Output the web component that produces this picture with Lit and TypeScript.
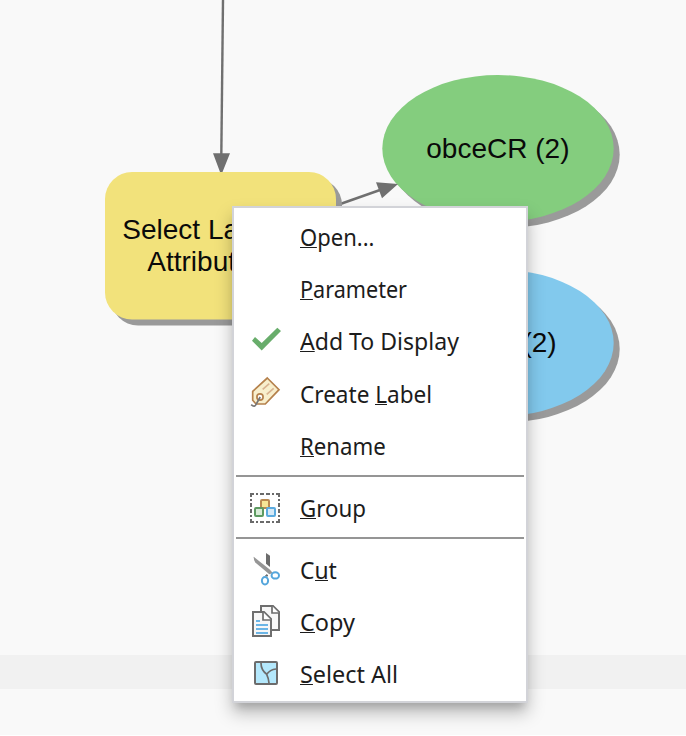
import { LitElement, html, css, svg, nothing } from "lit";
import { customElement, property } from "lit/decorators.js";
import { styleMap } from "lit/directives/style-map.js";

const icons: Record<string, unknown> = {
  check: svg`<path d="M3 14.7 6 10.9 12.7 16.9 28.3 1.7 32 5 12.7 24.5Z" fill="#68ad6b"/>`,
  tag: svg`
    <path d="M18.3-1 30 10.7 16.3 25H7L3.7 21.3V12.3Z" fill="#f8efcd" stroke="#b5814c" stroke-width="1.7"/>
    <path d="M13.7 10.3 20.3 4.7M17.7 15.3 24.7 9.3" stroke="#d9b491" stroke-width="1.7"/>
    <circle cx="11" cy="18" r="3.1" fill="#fff" stroke="#b5814c" stroke-width="1.7"/>
    <path d="M11.2 18 7.3 25Q5.5 29 2.2 25.6" fill="none" stroke="#777" stroke-width="1.7"/>`,
  group: svg`
    <path d="M1 1H31M1 29H31M2 0V30M30 0V30" stroke="#6a6a6a" stroke-width="2" stroke-dasharray="4 2 2 2 4 2 4 2 2 2 4 2"/>
    <rect x="12" y="7" width="8" height="8" rx="1" fill="#f6e596" stroke="#b98951" stroke-width="2"/>
    <rect x="6" y="15" width="8" height="8" rx="1" fill="#d9ecd8" stroke="#5d9a61" stroke-width="2"/>
    <rect x="18" y="15" width="8" height="8" rx="1" fill="#d5e9f7" stroke="#5baade" stroke-width="2"/>`,
  cut: svg`
    <path d="M17-2 21 .7V12L17 8.7Z" fill="#6c6c6c"/>
    <path d="M16.5 21 17.8 19.5 18.8 21Z" fill="#6c6c6c" stroke="#6c6c6c"/>
    <path d="M4.7 1.7 21 14.8 23.7 18 20.3 19.2 6.3 7.5Q4.5 5 4.7 1.7Z" fill="#969696"/>
    <ellipse cx="26.3" cy="20.4" rx="3.7" ry="3.2" fill="#fff" stroke="#55a6dc" stroke-width="2"/>
    <ellipse cx="16" cy="25.7" rx="3.1" ry="3.7" fill="#fff" stroke="#55a6dc" stroke-width="2"/>`,
  copy: svg`
    <path d="M12-1H24L30 5V23H12Z" fill="#f7f7f7" stroke="#6e6e6e" stroke-width="2"/>
    <path d="M23-1V6H30" fill="#fff" stroke="#6e6e6e" stroke-width="1.7"/>
    <path d="M4 5H15L22 12V29H4Z" fill="#f7f7f7" stroke="#6e6e6e" stroke-width="2"/>
    <path d="M14 5V13H22" fill="#fff" stroke="#6e6e6e" stroke-width="1.7"/>
    <path d="M7 14H11M7 18H19M7 22H19M7 26H19" stroke="#6bb5e6" stroke-width="2"/>`,
  map: svg`
    <rect x="6" y="3" width="22" height="22" rx="1" fill="#b4e8fc" stroke="#6c6c6c" stroke-width="2"/>
    <path d="M12 4Q12 11 17.7 15.3Q19.5 19 20 24M17.7 15.3Q21 10.5 27 10" fill="none" stroke="#6c6c6c" stroke-width="1.7"/>`,
};

interface Entry {
  label: string;
  /** Index of the underlined access key. */
  key: number;
  width: number;
  icon?: string;
  gap?: number;
}

const groups: Entry[][] = [
  [
    { label: "Open...", key: 0, width: 74 },
    { label: "Parameter", key: 0, width: 107.5 },
    { label: "Add To Display", key: 0, width: 159 },
    { label: "Create Label", key: 7, width: 132.5, icon: "tag", gap: 1 },
    { label: "Rename", key: 0, width: 86 },
  ],
  [{ label: "Group", key: 0, width: 66.5, icon: "group" }],
  [
    { label: "Cut", key: 1, width: 37, icon: "cut" },
    { label: "Copy", key: 0, width: 55, icon: "copy" },
    { label: "Select All", key: 0, width: 98.5, icon: "map" },
  ],
];
groups[0][2].icon = "check";

@customElement("menu-entry")
class MenuEntry extends LitElement {
  @property({ attribute: false }) entry!: Entry;

  static styles = css`
    :host { display: flex; align-items: center; height: 52px; padding-left: 15px; gap: 19px; }
    .icon { width: 32px; height: 32px; flex: none; overflow: visible; }
    .label {
      font: 23.5px/32px "Noto Sans", "Open Sans", sans-serif;
      color: #1c1c1c;
      white-space: pre;
      transform-origin: 0 50%;
      margin-bottom: 2px;
    }
    .key { box-shadow: inset 0 -1px #1c1c1c; display: inline-block; height: 27px; line-height: 32px; vertical-align: top; }
  `;

  firstUpdated() {
    this.fit();
    document.fonts.ready.then(() => this.fit());
  }

  /* Condenses the label to its design width. */
  fit() {
    const el = this.renderRoot.querySelector<HTMLElement>(".label")!;
    if (el.offsetWidth) el.style.transform = `scaleX(${this.entry.width / el.offsetWidth})`;
  }

  render() {
    const { label, key, icon } = this.entry;
    return html`<svg class="icon" viewBox="0 0 32 32">${icon ? icons[icon] : nothing}</svg
      ><span class="label">${label.slice(0, key)}<span class="key">${label[key]}</span>${label.slice(key + 1)}</span>`;
  }
}

@customElement("app-root")
class AppRoot extends LitElement {
  static styles = css`
    :host { display: block; position: relative; width: 686px; height: 736px; overflow: hidden; background: #f9f9f9; }
    .canvas { display: block; width: 686px; height: 736px; }
    .canvas text { font: 28px "Liberation Sans", Arial, sans-serif; fill: #0a0a0a; }
    .menu {
      position: absolute; left: 232px; top: 206px; width: 296px; height: 497px; box-sizing: border-box;
      padding-top: 4px; border: 2px solid #d2d3d8; background: #fff;
      box-shadow: 0 10px 16px rgba(0, 0, 0, 0.25), 0 8px 8px -4px rgba(0, 0, 0, 0.14);
    }
    .rule { height: 2px; margin: 2px 2px 6px; background: #959595; }
  `;

  render() {
    return html`
      <svg class="canvas" viewBox="0 0 686 736">
        <rect y="655" width="686" height="34" fill="#f1f1f1" />
        <rect y="735" width="686" height="1" fill="#fff" />
        <g stroke="#707070" stroke-width="2.4">
          <path d="M223 0 221.3 156" />
          <path d="M336 205.5 380 190" />
        </g>
        <g fill="#9a9a9a">
          <rect x="111" y="178" width="231" height="147.5" rx="27" />
          <ellipse cx="504" cy="154.5" rx="115.7" ry="73.5" />
          <ellipse cx="504" cy="349" rx="115.7" ry="73.5" />
        </g>
        <rect x="105" y="172" width="231" height="147.5" rx="27" fill="#f2e27b" />
        <ellipse cx="498" cy="148.5" rx="115.7" ry="73.5" fill="#84cd7e" />
        <ellipse cx="498" cy="343" rx="115.7" ry="73.5" fill="#82c9ed" />
        <path d="M213 153.3H230L222.5 172H220Z M376 182.3 398 184 382 198.2Z" fill="#707070" />
        <text x="122.3" y="239">Select La</text>
        <text x="147.3" y="271">Attribut</text>
        <text x="426.3" y="158">obceCR (2)</text>
        <text x="522.4" y="352.3">(2)</text>
      </svg>
      <div class="menu">
        ${groups.map(
          (group, i) => html`${i ? html`<div class="rule"></div>` : nothing}
          ${group.map(
            (entry) => html`<menu-entry .entry=${entry} style=${styleMap({ marginTop: `${entry.gap ?? 0}px` })}></menu-entry>`
          )}`
        )}
      </div>
    `;
  }
}
